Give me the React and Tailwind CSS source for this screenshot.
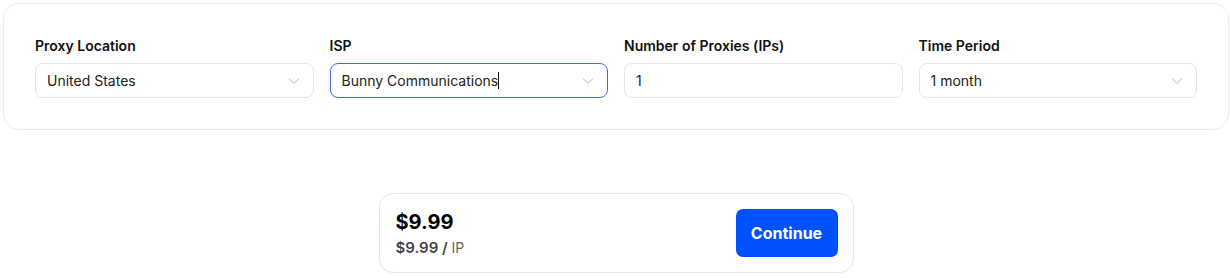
import React from 'react';

const Chevron = () => (
  <svg width="12" height="8" viewBox="0 0 12 8" fill="none" className="shrink-0">
    <path d="M1 1.5l5 5 5-5" stroke="#b5b5b5" strokeWidth="1" />
  </svg>
);

const Field = ({ label, children }) => (
  <div className="flex flex-col gap-[9px]">
    <label className="text-[14px] font-semibold text-[#111] leading-[17px]">{label}</label>
    {children}
  </div>
);

const App = () => (
  <div className="w-[1230px] h-[278px] bg-white font-['Inter',sans-serif] pt-[3px] pl-[3px] pr-[1px]">
    <div className="border border-[#ececec] rounded-[16px] px-[31px] pt-[33px] pb-[31px] grid grid-cols-4 gap-x-[16px]">
      <Field label="Proxy Location">
        <div className="h-[35px] border border-[#e6e6e6] rounded-[8px] flex items-center justify-between pl-[11px] pr-[13px] text-[14px] text-[#222]">
          <span>United States</span>
          <Chevron />
        </div>
      </Field>
      <Field label="ISP">
        <div className="h-[35px] border border-[#3d74d6] rounded-[8px] flex items-center justify-between pl-[11px] pr-[13px] text-[14px] text-[#222]">
          <span className="flex items-center">Bunny Communications<span className="inline-block w-px h-[17px] bg-[#111]" /></span>
          <Chevron />
        </div>
      </Field>
      <Field label="Number of Proxies (IPs)">
        <div className="h-[35px] border border-[#e6e6e6] rounded-[8px] flex items-center pl-[11px] text-[14px] text-[#222]">
          1
        </div>
      </Field>
      <Field label="Time Period">
        <div className="h-[35px] border border-[#e6e6e6] rounded-[8px] flex items-center justify-between pl-[11px] pr-[13px] text-[14px] text-[#222]">
          <span>1 month</span>
          <Chevron />
        </div>
      </Field>
    </div>
    <div className="flex justify-center mt-[63px]">
      <div className="w-[475px] h-[80px] border border-[#e6e6e6] rounded-[14px] flex items-center justify-between pl-[16px] pr-[15px]">
        <div className="flex flex-col">
          <span className="text-[20px] font-bold text-black leading-[26px]">$9.99</span>
          <span className="text-[15px] font-semibold text-[#444] leading-[20px] mt-[3px]">
            $9.99 / <span className="font-normal text-[14px] text-[#666]">IP</span>
          </span>
        </div>
        <button className="w-[102px] h-[48px] rounded-[7px] bg-[#0052ff] text-white text-[16px] font-bold">
          Continue
        </button>
      </div>
    </div>
  </div>
);

export default App;
